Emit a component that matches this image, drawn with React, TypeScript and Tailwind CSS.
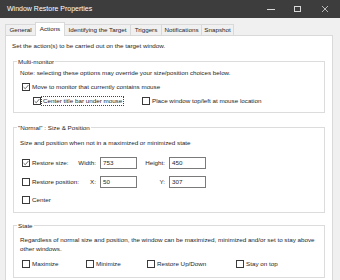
import type { ReactNode } from 'react';

const TABS = [
  { label: 'General', w: 'w-[31px]' },
  { label: 'Actions', w: 'w-[30px]', active: true },
  { label: 'Identifying the Target', w: 'w-[67px]' },
  { label: 'Triggers', w: 'w-[32px]' },
  { label: 'Notifications', w: 'w-[41px]' },
  { label: 'Snapshot', w: 'w-[33px]' },
];

function Check({ checked = false }: { checked?: boolean }) {
  return (
    <span className="w-[8px] h-[8px] shrink-0 border border-[#3a3a3a] bg-white flex items-center justify-center">
      {checked && (
        <svg viewBox="0 0 8 8" className="w-[6px] h-[6px]">
          <path d="M0.8 4.2 L3 6.3 L7.2 1.4" fill="none" stroke="#222" strokeWidth="0.9" />
        </svg>
      )}
    </span>
  );
}

function Option({ checked, children, className = '' }: { checked?: boolean; children: ReactNode; className?: string }) {
  return (
    <div className={`flex items-center gap-[2px] ${className}`}>
      <Check checked={checked} />
      <span className="whitespace-nowrap">{children}</span>
    </div>
  );
}

function Group({ title, children, className = '' }: { title: string; children: ReactNode; className?: string }) {
  return (
    <div className={`relative mx-[7px] border border-[#dcdcdc] ${className}`}>
      <span className="absolute -top-[5px] left-[3px] bg-white px-[1px] leading-[9px] whitespace-nowrap">{title}</span>
      {children}
    </div>
  );
}

function Field({ value }: { value: string }) {
  return (
    <div className="w-[37px] h-[12px] border border-[#7a7a7a] bg-white px-[2px] flex items-center leading-none">
      {value}
    </div>
  );
}

export default function App() {
  return (
    <div className="w-[340px] h-[280px] overflow-hidden bg-[#f0f0f0] font-['Liberation_Sans',Arial,sans-serif] text-[6.25px] text-[#262626]">
      {/* title bar */}
      <div className="h-[18px] bg-[#3d3d3d] flex items-center text-white">
        <span className="pl-[7px] text-[7px] flex-1 whitespace-nowrap">Window Restore Properties</span>
        <div className="flex items-center h-full">
          <div className="w-[8px] h-px bg-[#d8d8d8] mr-[19px]" />
          <div className="w-[7px] h-[6px] border border-[#d8d8d8] mr-[21px]" />
          <svg viewBox="0 0 6 6" className="w-[6px] h-[6px] mr-[12px]">
            <path d="M0 0 L6 6 M6 0 L0 6" stroke="#d8d8d8" strokeWidth="0.8" />
          </svg>
        </div>
      </div>

      <div className="pl-[5px] pr-[7px] pt-[4px]">
        {/* tabs */}
        <div className="flex items-end h-[13px]">
          {TABS.map((t, i) => (
            <div
              key={t.label}
              className={`${t.w} ${i > 0 ? '-ml-px' : ''} flex items-center justify-center border-t border-l border-r border-[#d9d9d9] whitespace-nowrap ${
                t.active ? 'h-[14px] -mb-px bg-white relative z-10 pb-[2px]' : 'h-[11px] bg-[#f0f0f0]'
              }`}
            >
              {t.label}
            </div>
          ))}
        </div>

        {/* panel */}
        <div className="bg-white border border-[#d9d9d9] h-[260px] pt-[5px]">
          <div className="pl-[6px] leading-[10px] whitespace-nowrap">
            Set the action(s) to be carried out on the target window.
          </div>

          <Group title="Multi-monitor" className="mt-[10px] pt-[6px] pb-[4px]">
            <div className="pl-[6px] leading-[10px] whitespace-nowrap">
              Note: selecting these options may override your size/position choices below.
            </div>
            <Option checked className="h-[14px] mt-[2px] pl-[8px]">
              Move to monitor that currently contains mouse
            </Option>
            <div className="h-[14px] flex items-center pl-[19px]">
              <div className="w-[109px] flex items-center">
                <Check checked />
                <span className="px-[1px] border border-dotted border-[#444] leading-[8px] whitespace-nowrap">
                  Center title bar under mouse
                </span>
              </div>
              <Option>Place window top/left at mouse location</Option>
            </div>
          </Group>

          <Group title={'"Normal" : Size & Position'} className="mt-[14px] pt-[10px] pb-[5px]">
            <div className="pl-[6px] leading-[10px] whitespace-nowrap">
              Size and position when not in a maximized or minimized state
            </div>
            <div className="h-[16px] mt-[7px] pl-[8px] flex items-center">
              <Option checked className="w-[55px]">Restore size:</Option>
              <span className="w-[19px] text-right">Width:</span>
              <div className="ml-[4px]"><Field value="753" /></div>
              <span className="w-[28px] text-right">Height:</span>
              <div className="ml-[4px]"><Field value="450" /></div>
            </div>
            <div className="h-[16px] mt-[3px] pl-[8px] flex items-center">
              <Option className="w-[55px]">Restore position:</Option>
              <span className="w-[19px] text-right">X:</span>
              <div className="ml-[4px]"><Field value="50" /></div>
              <span className="w-[28px] text-right">Y:</span>
              <div className="ml-[4px]"><Field value="307" /></div>
            </div>
            <Option className="h-[14px] mt-[3px] pl-[8px]">Center</Option>
          </Group>

          <Group title="State" className="mt-[12px] pt-[9px] pb-[7px]">
            <div className="pl-[6px] leading-[9px] whitespace-nowrap">
              Regardless of normal size and position, the window can be maximized, minimized and/or set to stay above
              <br />
              other windows.
            </div>
            <div className="h-[12px] mt-[5px] pl-[8px] flex items-center">
              <Option className="w-[64px]">Maximize</Option>
              <Option className="w-[61px]">Minimize</Option>
              <Option className="w-[89px]">Restore Up/Down</Option>
              <Option>Stay on top</Option>
            </div>
          </Group>
        </div>
      </div>
    </div>
  );
}
